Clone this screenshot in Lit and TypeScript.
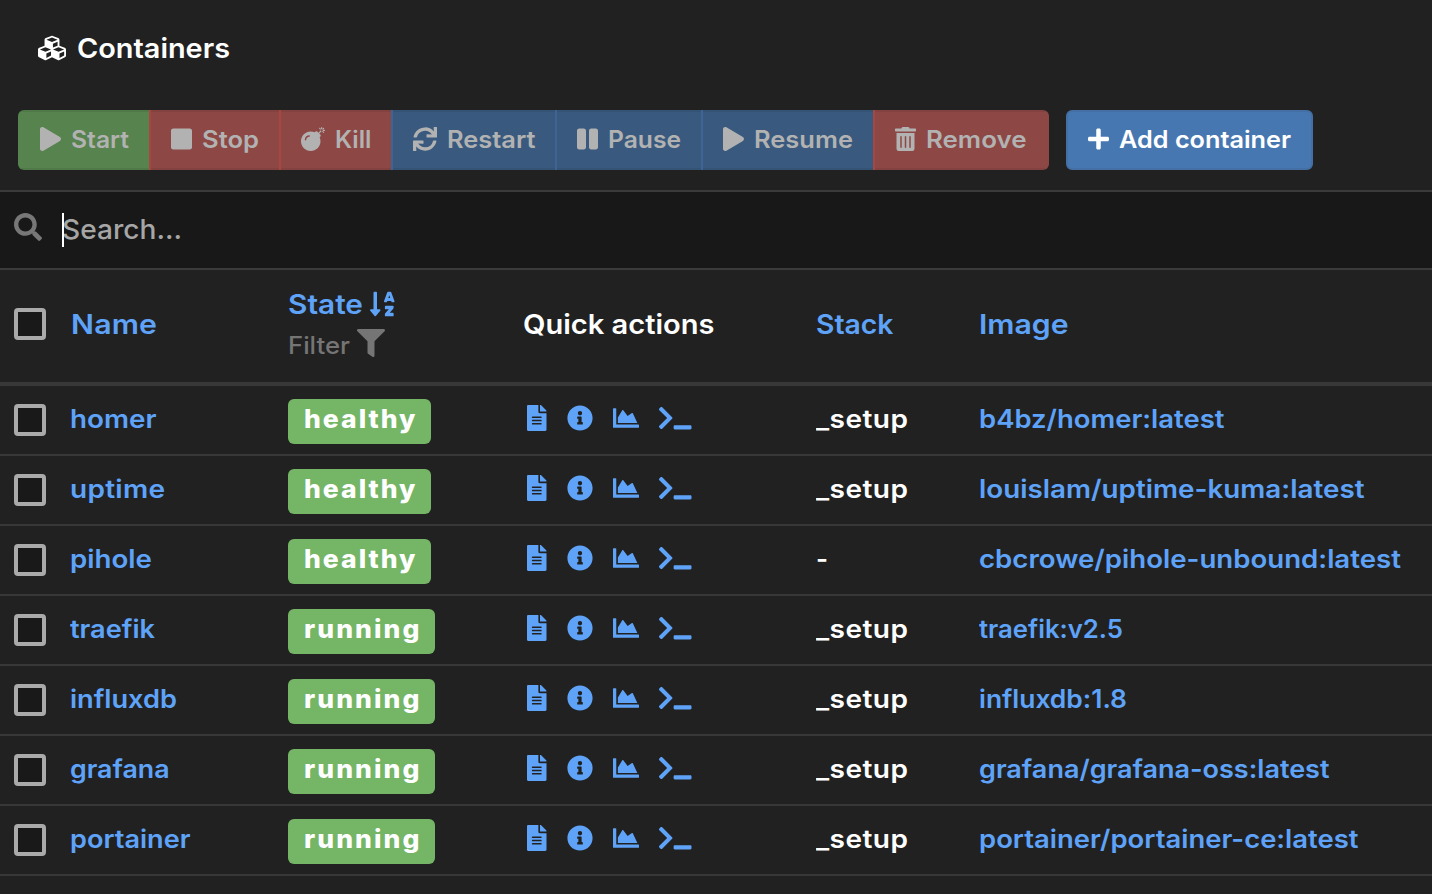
import { LitElement, html, css, svg } from "lit";
import { customElement, property } from "lit/decorators.js";

type Glyph = { w: number; d: string };

const ICONS: Record<string, Glyph> = {
  cubes: { w: 512, d: "M488.6 250.2L392 214V105.5c0-15-9.3-28.4-23.4-33.7l-100-37.5c-8.1-3.1-17.1-3.1-25.3 0l-100 37.5c-14.1 5.3-23.4 18.7-23.4 33.7V214l-96.6 36.2C9.3 255.5 0 268.9 0 283.9V394c0 13.6 7.7 26.1 19.9 32.2l100 50c10.1 5.1 22.1 5.1 32.2 0l103.9-52 103.9 52c10.1 5.1 22.1 5.1 32.2 0l100-50c12.2-6.1 19.9-18.6 19.9-32.2V283.9c0-15-9.3-28.4-23.4-33.7zM358 214.8l-85 31.9v-68.2l85-37v73.3zM154 104.1l102-38.2 102 38.2v.6l-102 41.4-102-41.4v-.6zm84 291.1l-85 42.5v-79.1l85-38.8v75.4zm0-112l-102 41.4-102-41.4v-.6l102-38.2 102 38.2v.6zm240 112l-85 42.5v-79.1l85-38.8v75.4zm0-112l-102 41.4-102-41.4v-.6l102-38.2 102 38.2v.6z" },
  play: { w: 448, d: "M424.4 214.7L72.4 6.6C43.8-10.3 0 6.1 0 47.9V464c0 37.5 40.7 60.1 72.4 41.3l352-208c31.4-18.5 31.5-64.1 0-82.6z" },
  stop: { w: 448, d: "M400 32H48C21.5 32 0 53.5 0 80v352c0 26.5 21.5 48 48 48h352c26.5 0 48-21.5 48-48V80c0-26.5-21.5-48-48-48z" },
  bomb: { w: 512, d: "M440.5 88.5l-52 52L415 167c9.4 9.4 9.4 24.6 0 33.9l-17.4 17.4c11.8 26.1 18.4 55.1 18.4 85.6 0 114.9-93.1 208-208 208S0 418.9 0 304 93.1 96 208 96c30.5 0 59.5 6.6 85.6 18.4L311 97c9.4-9.4 24.6-9.4 33.9 0l26.5 26.5 52-52 17.1 17zM500 60h-24c-6.6 0-12 5.4-12 12s5.4 12 12 12h24c6.6 0 12-5.4 12-12s-5.4-12-12-12zM440 0c-6.6 0-12 5.4-12 12v24c0 6.6 5.4 12 12 12s12-5.4 12-12V12c0-6.6-5.4-12-12-12zm33.9 55l17-17c4.7-4.7 4.7-12.3 0-17-4.7-4.7-12.3-4.7-17 0l-17 17c-4.7 4.7-4.7 12.3 0 17 4.8 4.7 12.4 4.7 17 0zm-67.8 0c4.7 4.7 12.3 4.7 17 0 4.7-4.7 4.7-12.3 0-17l-17-17c-4.7-4.7-12.3-4.7-17 0-4.7 4.7-4.7 12.3 0 17l17 17zm67.8 34c-4.7-4.7-12.3-4.7-17 0-4.7 4.7-4.7 12.3 0 17l17 17c4.7 4.7 12.3 4.7 17 0 4.7-4.7 4.7-12.3 0-17l-17-17zM112 272c0-35.3 28.7-64 64-64 8.8 0 16-7.2 16-16s-7.2-16-16-16c-52.9 0-96 43.1-96 96 0 8.8 7.2 16 16 16s16-7.2 16-16z" },
  sync: { w: 512, d: "M440.65 12.57l4 82.77A247.16 247.16 0 0 0 255.83 8C134.73 8 33.91 94.92 12.29 209.82A12 12 0 0 0 24.09 224h49.05a12 12 0 0 0 11.67-9.26 175.91 175.91 0 0 1 317-56.94l-101.46-4.86a12 12 0 0 0-12.57 12v47.41a12 12 0 0 0 12 12H500a12 12 0 0 0 12-12V12a12 12 0 0 0-12-12h-47.37a12 12 0 0 0-11.98 12.57zM255.83 432a175.61 175.61 0 0 1-146-77.8l101.8 4.87a12 12 0 0 0 12.57-12v-47.4a12 12 0 0 0-12-12H12a12 12 0 0 0-12 12V500a12 12 0 0 0 12 12h47.35a12 12 0 0 0 12-12.6l-4.15-82.57A247.17 247.17 0 0 0 255.83 504c121.11 0 221.93-86.92 243.55-201.82a12 12 0 0 0-11.8-14.18h-49.05a12 12 0 0 0-11.67 9.26A175.86 175.86 0 0 1 255.83 432z" },
  pause: { w: 448, d: "M144 479H48c-26.5 0-48-21.5-48-48V79c0-26.5 21.5-48 48-48h96c26.5 0 48 21.5 48 48v352c0 26.5-21.5 48-48 48zm304-48V79c0-26.5-21.5-48-48-48h-96c-26.5 0-48 21.5-48 48v352c0 26.5 21.5 48 48 48h96c26.5 0 48-21.5 48-48z" },
  trash: { w: 448, d: "M32 464a48 48 0 0 0 48 48h288a48 48 0 0 0 48-48V128H32zm272-256a16 16 0 0 1 32 0v224a16 16 0 0 1-32 0zm-96 0a16 16 0 0 1 32 0v224a16 16 0 0 1-32 0zm-96 0a16 16 0 0 1 32 0v224a16 16 0 0 1-32 0zM432 32H312l-9.4-18.7A24 24 0 0 0 281.1 0H166.8a23.72 23.72 0 0 0-21.4 13.3L136 32H16A16 16 0 0 0 0 48v32a16 16 0 0 0 16 16h416a16 16 0 0 0 16-16V48a16 16 0 0 0-16-16z" },
  plus: { w: 448, d: "M416 208H272V64c0-17.67-14.33-32-32-32h-32c-17.67 0-32 14.33-32 32v144H32c-17.67 0-32 14.33-32 32v32c0 17.67 14.33 32 32 32h144v144c0 17.67 14.33 32 32 32h32c17.67 0 32-14.33 32-32V304h144c17.67 0 32-14.33 32-32v-32c0-17.67-14.33-32-32-32z" },
  search: { w: 512, d: "M505 442.7L405.3 343c-4.5-4.5-10.6-7-17-7H372c27.6-35.3 44-79.7 44-128C416 93.1 322.9 0 208 0S0 93.1 0 208s93.1 208 208 208c48.3 0 92.7-16.4 128-44v16.3c0 6.4 2.5 12.5 7 17l99.7 99.7c9.4 9.4 24.6 9.4 33.9 0l28.3-28.3c9.4-9.4 9.4-24.6.1-34zM208 336c-70.7 0-128-57.2-128-128 0-70.7 57.2-128 128-128 70.7 0 128 57.2 128 128 0 70.7-57.2 128-128 128z" },
  filter: { w: 512, d: "M487.976 0H24.028C2.71 0-8.047 25.866 7.058 40.971L192 225.941V432c0 7.831 3.821 15.17 10.237 19.662l80 55.98C298.02 518.69 320 507.493 320 487.98V225.941l184.947-184.97C520.021 25.896 509.338 0 487.976 0z" },
  sort: { w: 448, d: "M176 352h-48V48a16 16 0 0 0-16-16H80a16 16 0 0 0-16 16v304H16c-14.19 0-21.36 17.24-11.29 27.31l80 96a16 16 0 0 0 22.62 0l80-96C197.35 369.26 190.22 352 176 352zm240-64H288a16 16 0 0 0-16 16v32a16 16 0 0 0 16 16h56l-61.26 70.45A32 32 0 0 0 272 446.37V464a16 16 0 0 0 16 16h128a16 16 0 0 0 16-16v-32a16 16 0 0 0-16-16h-56l61.26-70.45A32 32 0 0 0 432 321.63V304a16 16 0 0 0-16-16zm31.06-85.38l-59.27-160A16 16 0 0 0 372.72 32h-41.44a16 16 0 0 0-15.07 10.62l-59.27 160A16 16 0 0 0 272 224h24.83a16 16 0 0 0 15.23-11.08l4.42-12.92h71l4.41 12.92A16 16 0 0 0 407.16 224H432a16 16 0 0 0 15.06-21.38zM335.61 144L352 96l16.39 48z" },
  file: { w: 384, d: "M224 136V0H24C10.7 0 0 10.7 0 24v464c0 13.3 10.7 24 24 24h336c13.3 0 24-10.7 24-24V160H248c-13.2 0-24-10.8-24-24zm64 236c0 6.6-5.4 12-12 12H108c-6.6 0-12-5.4-12-12v-8c0-6.6 5.4-12 12-12h168c6.6 0 12 5.4 12 12v8zm0-64c0 6.6-5.4 12-12 12H108c-6.6 0-12-5.4-12-12v-8c0-6.6 5.4-12 12-12h168c6.6 0 12 5.4 12 12v8zm0-72v8c0 6.6-5.4 12-12 12H108c-6.6 0-12-5.4-12-12v-8c0-6.6 5.4-12 12-12h168c6.6 0 12 5.4 12 12zm96-114.1v6.1H256V0h6.1c6.4 0 12.5 2.5 17 7l97.9 98c4.5 4.5 7 10.6 7 16.9z" },
  info: { w: 512, d: "M256 8C119.043 8 8 119.083 8 256c0 136.997 111.043 248 248 248s248-111.003 248-248C504 119.083 392.957 8 256 8zm0 110c23.196 0 42 18.804 42 42s-18.804 42-42 42-42-18.804-42-42 18.804-42 42-42zm56 254c0 6.627-5.373 12-12 12h-88c-6.627 0-12-5.373-12-12v-24c0-6.627 5.373-12 12-12h12v-64h-12c-6.627 0-12-5.373-12-12v-24c0-6.627 5.373-12 12-12h64c6.627 0 12 5.373 12 12v100h12c6.627 0 12 5.373 12 12v24z" },
  chart: { w: 512, d: "M500 384c6.6 0 12 5.4 12 12v40c0 6.6-5.4 12-12 12H12c-6.6 0-12-5.4-12-12V76c0-6.6 5.4-12 12-12h40c6.6 0 12 5.4 12 12v308h436zM372.7 159.5L288 216l-85.3-113.7c-5.1-6.8-15.5-6.3-19.9 1L96 248v104h384l-89.9-187.8c-3.2-6.5-11.4-8.7-17.4-4.7z" },
  terminal: { w: 640, d: "M257.981 272.971L63.638 467.314c-9.373 9.373-24.569 9.373-33.941 0L7.029 444.647c-9.357-9.357-9.375-24.522-.04-33.901L161.011 256 6.99 101.255c-9.335-9.379-9.317-24.544.04-33.901l22.667-22.667c9.373-9.373 24.569-9.373 33.941 0L257.981 239.03c9.373 9.372 9.373 24.568 0 33.941zM640 456v-32c0-13.255-10.745-24-24-24H312c-13.255 0-24 10.745-24 24v32c0 13.255 10.745 24 24 24h304c13.255 0 24-10.745 24-24z" },
};

/** Solid icon, sized by its em height. */
@customElement("ui-icon")
export class UiIcon extends LitElement {
  @property() name = "play";
  @property({ type: Number }) size = 24;

  static styles = css`
    :host { display: block; flex: none; line-height: 0; }
    .glyph { display: block; fill: currentColor; overflow: visible; }
  `;

  render() {
    const g = ICONS[this.name];
    return html`<svg class="glyph" width=${(g.w / 512) * this.size} height=${this.size}
      viewBox="0 0 ${g.w} 512">${svg`<path d=${g.d}></path>`}</svg>`;
  }
}

/** A one-line label, widened (glyphs first, then tracking) to fill a given width. */
@customElement("ui-label")
export class UiLabel extends LitElement {
  @property() text = "";
  @property({ type: Number }) span = 0;
  /** Largest horizontal stretch of the glyphs. */
  @property({ type: Number }) stretch = 1.1;

  static styles = css`
    :host { display: block; flex: none; white-space: pre; }
    .text { display: inline-block; transform-origin: 0 50%; }
  `;

  updated() {
    const el = this.renderRoot.querySelector<HTMLElement>(".text")!;
    el.style.letterSpacing = "0px";
    el.style.transform = "none";
    const natural = el.getBoundingClientRect().width;
    const gaps = Math.max(1, this.text.length - 1);
    const scale = Math.min(this.stretch, Math.max(1, this.span / natural));
    const tracking = this.text.length > 1 ? (this.span / scale - natural) / gaps : 0;
    el.style.letterSpacing = `${tracking.toFixed(3)}px`;
    el.style.transform = `scaleX(${scale.toFixed(4)})`;
    this.style.width = `${this.span}px`;
  }

  render() {
    return html`<span class="text">${this.text}</span>`;
  }
}

const ACTIONS = [
  { label: "Start", icon: "play", tone: "green", width: 132, span: 58 },
  { label: "Stop", icon: "stop", tone: "red", width: 130, span: 57 },
  { label: "Kill", icon: "bomb", tone: "red", width: 112, span: 36.5 },
  { label: "Restart", icon: "sync", tone: "blue", width: 164, span: 88.5 },
  { label: "Pause", icon: "pause", tone: "blue", width: 146, span: 73 },
  { label: "Resume", icon: "play", tone: "blue", width: 172, span: 99 },
  { label: "Remove", icon: "trash", tone: "red", width: 175, span: 100.5 },
];

const ROWS = [
  { name: "homer", nw: 86.5, state: "healthy", stack: "_setup", image: "b4bz/homer:latest", iw: 245.5 },
  { name: "uptime", nw: 95, state: "healthy", stack: "_setup", image: "louislam/uptime-kuma:latest", iw: 385.5 },
  { name: "pihole", nw: 82, state: "healthy", stack: "-", image: "cbcrowe/pihole-unbound:latest", iw: 422 },
  { name: "traefik", nw: 85, state: "running", stack: "_setup", image: "traefik:v2.5", iw: 144 },
  { name: "influxdb", nw: 107, state: "running", stack: "_setup", image: "influxdb:1.8", iw: 148 },
  { name: "grafana", nw: 99.5, state: "running", stack: "_setup", image: "grafana/grafana-oss:latest", iw: 350.5 },
  { name: "portainer", nw: 120.5, state: "running", stack: "_setup", image: "portainer/portainer-ce:latest", iw: 379.5 },
];

@customElement("app-root")
export class AppRoot extends LitElement {
  static styles = css`
    :host {
      display: block;
      width: 1432px;
      height: 894px;
      overflow: hidden;
      background: #212121;
      color: #fff;
      font-family: Inter, "Liberation Sans", sans-serif;
      font-size: 25.5px;
      font-weight: 600;
      line-height: 32px;
    }
    * { box-sizing: border-box; }
    .title { display: flex; align-items: center; gap: 11px; height: 110px; padding: 0 0 14px 38px; font-size: 27.5px; }
    .title ui-icon { margin-top: -1px; }
    .toolbar { display: flex; gap: 17px; height: 80px; padding: 0 18px 20px; font-size: 24px; }
    .toolbar ui-label { margin-top: 2px; }
    .group { display: flex; border-radius: 6px; overflow: hidden; }
    .btn {
      display: flex; align-items: center; gap: 10px; height: 60px; padding: 0 0 2px 22px;
      color: #b2b2b2; box-shadow: inset 0 2px rgba(0, 0, 0, 0.07), inset 0 -2px rgba(0, 0, 0, 0.07);
    }
    .btn + .btn { border-left: 2px solid #a8473f; margin-left: -1px; padding-left: 20px; }
    .green { background: #57834e; }
    .red { background: #8d4845; }
    .blue { background: #395a7e; }
    .group .blue.btn { border-left-color: #3d6494; }
    .add {
      display: flex; align-items: center; gap: 9.5px; width: 247px; height: 60px; padding: 0 0 2px 20px;
      border: 2px solid #436fa4; border-radius: 6px; background: #4777b0; color: #fff;
    }
    .search {
      display: flex; align-items: center; height: 80px; padding: 0 0 2px 14px;
      border-top: 2px solid #3b3b3b; border-bottom: 2px solid #3b3b3b;
      background: #181818; color: #a6a6a6; font-size: 27.5px; font-weight: 500;
    }
    .search ui-label { margin-top: -1px; }
    .glass { color: #777; padding-bottom: 4px; }
    .caret { width: 2px; height: 34px; margin: 2px -2px 0 20px; background: #fff; z-index: 1; }
    .row {
      display: grid; grid-template-columns: 56px 218px 238px 289.5px 163px 1fr; align-items: center;
      height: 70px; padding: 0 0 2px 14px; border-bottom: 2px solid #383838;
    }
    .head { height: 116px; padding-bottom: 4px; border-bottom-width: 4px; font-size: 27.5px; }
    .head > .link { margin-top: -1px; }
    .head > .name { margin-left: 0.5px; }
    .check { width: 32px; height: 32px; margin-top: 2px; border: 4px solid #aaa; border-radius: 4px; background: #191919; }
    .head .check { margin-top: 0; }
    .link { color: #5ea3f8; }
    .badge {
      width: fit-content; height: 45px; margin-top: 5px; padding: 4px 16px 0 15.5px; border-radius: 6px;
      background: #74b566; font-weight: 800; font-size: 25.5px;
    }
    .tools { display: flex; align-items: center; padding-bottom: 2px; color: #5ea3f8; }
    .tools .file { margin-left: 1px; }
    .tools .info { margin-left: 20.5px; }
    .tools .chart { margin-left: 19.5px; }
    .tools .terminal { margin-left: 20px; }
    .actions { margin: -1px 0 0 -3.5px; }
    .sorted { display: flex; align-items: center; gap: 7px; height: 40px; }
    .filter { display: flex; align-items: center; gap: 6.5px; height: 40px; color: #757575; font-size: 24px; font-weight: 500; }
    .filter ui-label { margin-top: 3px; }
    .funnel { margin-top: -3px; }
  `;

  private renderHead() {
    return html`<div class="row head">
      <div class="check"></div>
      <ui-label class="link name" text="Name" .span=${86}></ui-label>
      <div>
        <div class="sorted link"><ui-label text="State" .span=${75}></ui-label><ui-icon name="sort" .size=${28}></ui-icon></div>
        <div class="filter"><ui-label text="Filter" .span=${62}></ui-label><ui-icon class="funnel" name="filter" .size=${28}></ui-icon></div>
      </div>
      <ui-label class="actions" text="Quick actions" .span=${191.5}></ui-label>
      <ui-label class="link" text="Stack" .span=${77.5}></ui-label>
      <ui-label class="link" text="Image" .span=${89.5}></ui-label>
    </div>`;
  }

  render() {
    return html`
      <div class="title"><ui-icon name="cubes" .size=${28}></ui-icon><ui-label text="Containers" .span=${153}></ui-label></div>
      <div class="toolbar">
        <div class="group">
          ${ACTIONS.map((a, i) => html`<div class="btn ${a.tone}" style="width:${a.width + (i ? 1 : 0)}px">
            <ui-icon .name=${a.icon} .size=${24}></ui-icon><ui-label .text=${a.label} .span=${a.span}></ui-label>
          </div>`)}
        </div>
        <div class="add"><ui-icon name="plus" .size=${24}></ui-icon><ui-label text="Add container" .span=${172}></ui-label></div>
      </div>
      <div class="search">
        <ui-icon class="glass" name="search" .size=${28}></ui-icon>
        <div class="caret"></div>
        <ui-label text="Search..." .span=${120}></ui-label>
      </div>
      ${this.renderHead()}
      ${ROWS.map((r) => html`<div class="row">
        <div class="check"></div>
        <ui-label class="link" .text=${r.name} .span=${r.nw}></ui-label>
        <div class="badge"><ui-label .text=${r.state} .stretch=${1.04} .span=${r.state === "healthy" ? 111.5 : 115.5}></ui-label></div>
        <div class="tools">
          <ui-icon class="file" name="file" .size=${26}></ui-icon>
          <ui-icon class="info" name="info" .size=${26}></ui-icon>
          <ui-icon class="chart" name="chart" .size=${26}></ui-icon>
          <ui-icon class="terminal" name="terminal" .size=${26}></ui-icon>
        </div>
        <ui-label .text=${r.stack} .span=${r.stack === "-" ? 12 : 92}></ui-label>
        <ui-label class="link" .text=${r.image} .span=${r.iw}></ui-label>
      </div>`)}
    `;
  }
}
